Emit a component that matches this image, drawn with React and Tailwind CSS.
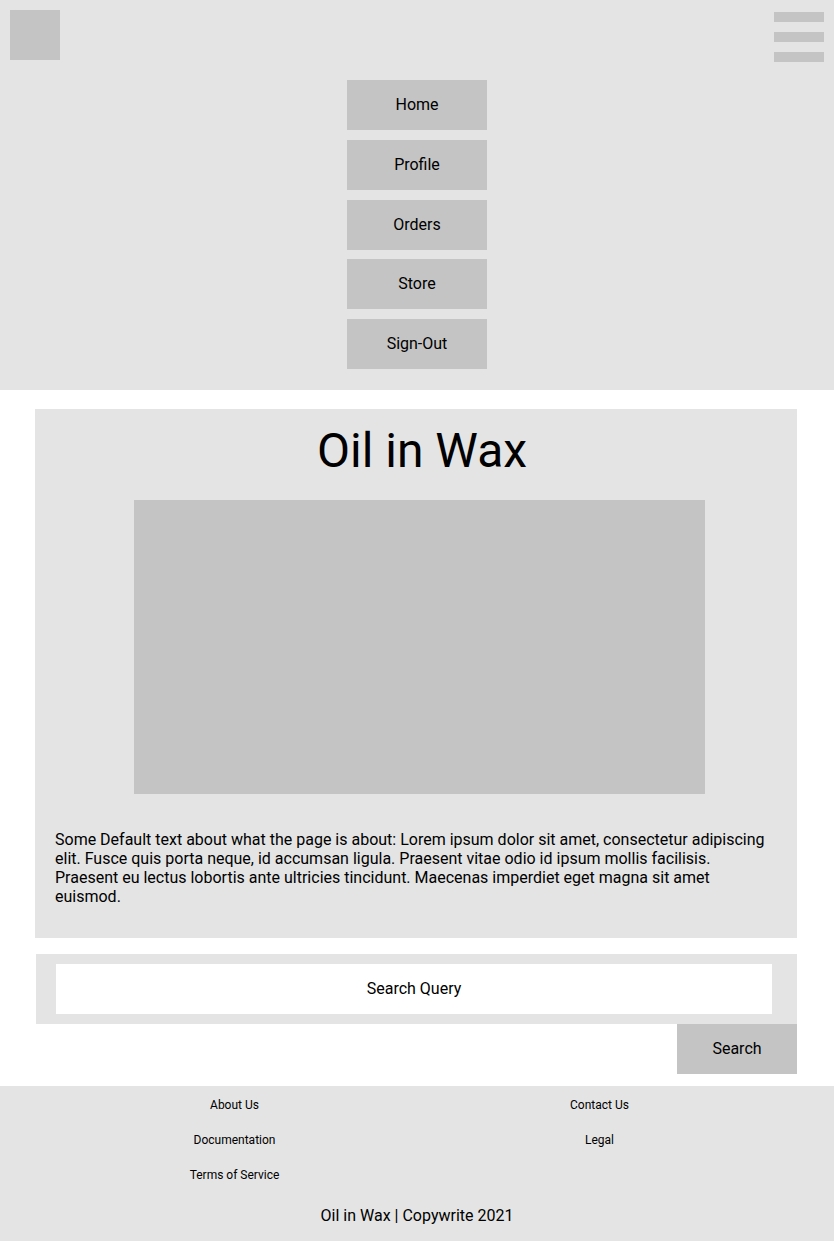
export default function App() {
  const nav = ["Home", "Profile", "Orders", "Store", "Sign-Out"];
  return (
    <div className="w-[834px] min-h-[1241px] bg-white text-black font-['Roboto',sans-serif] flex flex-col">
      <header className="relative h-[390px] bg-[#e4e4e4] flex flex-col items-center pt-[80px]">
        <div className="absolute left-[10px] top-[10px] w-[50px] h-[50px] bg-[#c4c4c4]" />
        <div className="absolute right-[10px] top-[12px] flex flex-col gap-[10px]">
          <div className="w-[50px] h-[10px] bg-[#c4c4c4]" />
          <div className="w-[50px] h-[10px] bg-[#c4c4c4]" />
          <div className="w-[50px] h-[10px] bg-[#c4c4c4]" />
        </div>
        <nav className="flex flex-col gap-[9.75px]">
          {nav.map((n) => (
            <div key={n} className="w-[140px] h-[50px] bg-[#c4c4c4] flex items-center justify-center text-[16px] leading-[19px] pb-[1px]">
              {n}
            </div>
          ))}
        </nav>
      </header>

      <main className="flex flex-col">
        <section className="mt-[19px] ml-[35px] w-[762px] bg-[#e4e4e4] pt-[14px] pb-[32px]">
          <h1 className="text-center pl-[12px] text-[48px] leading-[56px] font-normal">Oil in Wax</h1>
          <div className="mt-[21px] ml-[99px] w-[571px] h-[294px] bg-[#c4c4c4]" />
          <p className="mt-[36px] px-[20px] text-[16px] leading-[19px]">
            Some Default text about what the page is about: Lorem ipsum dolor sit amet, consectetur adipiscing elit. Fusce quis porta neque, id accumsan ligula. Praesent vitae odio id ipsum mollis facilisis. Praesent eu lectus lobortis ante ultricies tincidunt. Maecenas imperdiet eget magna sit amet euismod.
          </p>
        </section>

        <div className="mt-[16px] ml-[36px] w-[761px] flex flex-col">
          <div className="bg-[#e4e4e4] pl-[20px] pr-[25px] py-[10px]">
            <div className="h-[50px] bg-white flex items-center justify-center text-[16px] leading-[19px] pb-[2px]">
              Search Query
            </div>
          </div>
          <div className="flex justify-end">
            <div className="w-[120px] h-[50px] bg-[#c4c4c4] flex items-center justify-center text-[16px] leading-[19px] pb-[2px]">
              Search
            </div>
          </div>
        </div>
      </main>

      <footer className="mt-[12px] h-[155px] bg-[#e4e4e4] flex flex-col">
        <div className="mx-auto w-[730px] grid grid-cols-2 text-[12px] leading-[14px]">
          <div className="h-[35px] flex items-center justify-center pt-[2px]">About Us</div>
          <div className="h-[35px] flex items-center justify-center pt-[2px]">Contact Us</div>
          <div className="h-[35px] flex items-center justify-center pt-[2px]">Documentation</div>
          <div className="h-[35px] flex items-center justify-center pt-[2px]">Legal</div>
          <div className="h-[35px] flex items-center justify-center pt-[2px]">Terms of Service</div>
          <div className="h-[35px]" />
        </div>
        <div className="h-[48px] flex items-center justify-center text-[16px] leading-[19px]">
          Oil in Wax | Copywrite 2021
        </div>
      </footer>
    </div>
  );
}
